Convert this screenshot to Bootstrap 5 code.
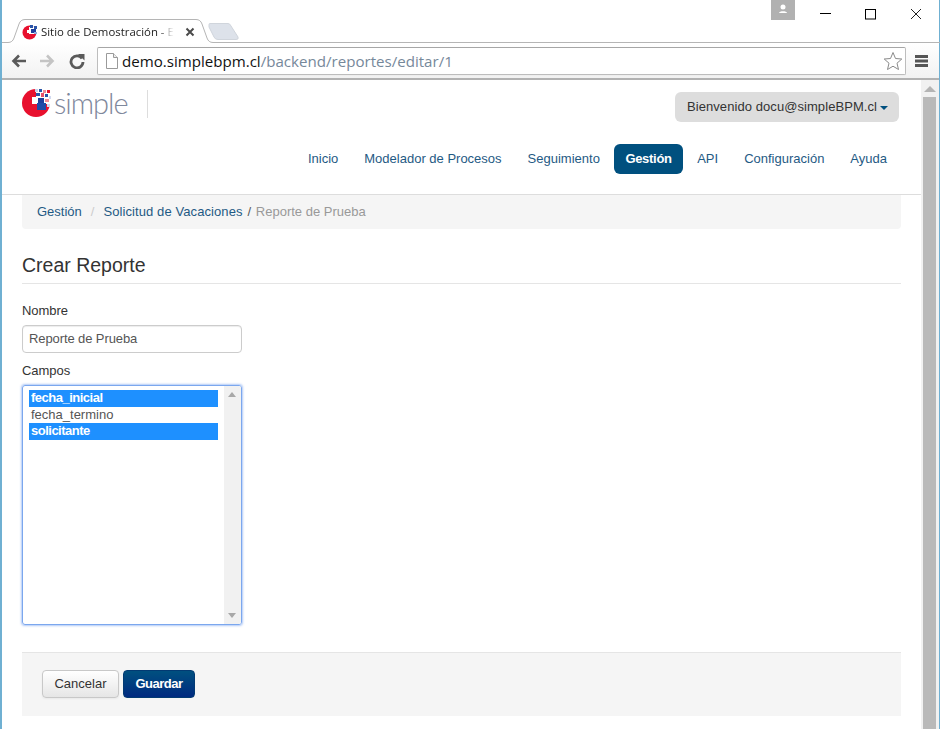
<!DOCTYPE html>
<html lang="es">
<head>
<meta charset="utf-8">
<title>Sitio de Demostración</title>
<link href="https://cdn.jsdelivr.net/npm/bootstrap@5.3.0/dist/css/bootstrap.min.css" rel="stylesheet">
<style>
html,body{margin:0;height:729px;overflow:hidden;background:#fff}
body{font-family:"Liberation Sans",Arial,sans-serif;font-size:13px;color:#333;line-height:18px}
.win{height:729px;width:940px;border-left:2px solid #6fb0d2;border-right:1px solid #6fb0d2;display:flex;flex-direction:column;background:#fff}
.tabbar{height:43px;flex:none;position:relative;background:#fff}
.tabshape{position:absolute;left:0;top:0}
.tabitem{position:absolute;left:20px;top:22px;width:168px;height:20px;display:flex;align-items:center;gap:3px;font-family:"Open Sans","Noto Sans",sans-serif;font-size:11.4px;color:#222}
.tabtext{white-space:nowrap;flex:none;-webkit-mask-image:linear-gradient(90deg,#000 88%,transparent);mask-image:linear-gradient(90deg,#000 88%,transparent)}
.tabx{position:absolute;left:163px;top:5px}
.winctl{position:absolute;left:769px;top:0;width:169px;height:20px}
.avatar{position:absolute;left:0;top:0;width:24px;height:20px;background:#b1b1b1}
.ctl{position:absolute}
.toolbar{height:37px;flex:none;background:linear-gradient(#fff,#f2f2f2);border-bottom:2px solid #b2b2b2;display:flex;align-items:center;position:relative;padding-left:6px}
.tbicon{flex:none;display:block}
.urlbox{position:absolute;left:95px;top:4px;width:809px;height:28px;background:#fff;border:1px solid #bdbdbd;border-top-color:#a6a6a6;border-radius:2px;display:flex;align-items:center;font-family:"Open Sans","Noto Sans",sans-serif;font-size:15.1px;padding-left:24px;white-space:nowrap;box-shadow:0 1px 0 #eee}
.urlhost{color:#111}.urlpath{color:#76889a}
.docicon{position:absolute;left:7px;top:5px}
.staricon{position:absolute;left:785px;top:3px}
.menuicon{position:absolute;left:913px;top:11px}
.viewport{flex:1;display:flex;min-height:0}
.pagearea{flex:1;min-width:0;position:relative}
.vscroll{width:18px;flex:none;background:#f1f1f1;position:relative}
.vthumb{position:absolute;left:2px;top:17px;width:13px;bottom:0;background:#b9b9b9}
.varrow{position:absolute;left:3px;top:6px;width:0;height:0;border-left:6px solid transparent;border-right:6px solid transparent;border-bottom:6px solid #b4b4b4}
.sitehead{height:115px;border-bottom:1px solid #ddd;position:relative}
.logoline{display:flex;align-items:flex-start;position:absolute;left:20px;top:8px;height:30px}
.logosvg{display:block;flex:none}
.logoword{font-family:"Lato",sans-serif;font-weight:300;font-size:29px;line-height:30px;color:#7f889c;margin-left:0;letter-spacing:-1px;width:93px;height:30px}
.logosep{width:1px;height:28px;background:#ddd;flex:none;margin-top:2px}
.welcome{position:absolute;left:673px;top:12px;height:30px;width:224px;background:#ddd;border-radius:6px;border:0;color:#333;font-size:13px;letter-spacing:.07px;padding:0 0 0 12px;display:flex;align-items:center;white-space:nowrap}
.caretdown{display:inline-block;margin-left:3px;margin-top:2px;border-left:4px solid transparent;border-right:4px solid transparent;border-top:4px solid #00507f}
.mainnav{position:absolute;right:22px;top:64px;gap:2px}
.mainnav .nav-link{color:#1f5a84;font-size:13px;line-height:18px;padding:6px 12px;border-radius:6px}
.mainnav .nav-link.active{background:#00507f;color:#fff;font-weight:700;letter-spacing:-.3px;padding:6px 11.500px}
.wrapbody{padding:0 20px}
.crumbs{background:#f5f5f5;height:34px;margin:0;padding:0 15px;border-radius:0 0 4px 4px;align-items:center;font-size:13px;--bs-breadcrumb-margin-bottom:0}
.crumbs a{color:#1f5a84;text-decoration:none}
.crumbs .solink{letter-spacing:.09px}
.crumbs .breadcrumb-item.active{color:#999}
.crumbs .breadcrumb-item+.breadcrumb-item{padding-left:9px}
.crumbs .breadcrumb-item+.breadcrumb-item::before{color:#ccc;padding-right:9px}
.crumbs .breadcrumb-item+.plainsep{padding-left:5px}
.crumbs .breadcrumb-item+.plainsep::before{display:none}
.crumbs .slashmark{color:#555;margin-right:1px}
.pagetitle{font-size:19.500px;font-weight:400;line-height:30px;color:#333;margin:21px 0 0;padding-bottom:2px;border-bottom:1px solid #e5e5e5;height:34px}
.fieldname{display:block;margin:18px 0 5px;font-size:13px;line-height:18px;color:#333;letter-spacing:-.05px}
.textin{width:220px;height:28px;border:1px solid #ccc;border-radius:4px;padding:0 6px;font-size:13px;letter-spacing:-.1px;color:#555;line-height:26px;box-shadow:inset 0 1px 1px rgba(0,0,0,.075)}
.fieldname2{margin-top:9px;margin-bottom:5px}
.multiselect{width:220px;height:240px;border:1px solid #7ba7ee;border-radius:3px;box-shadow:0 0 2px 1px rgba(100,150,240,.5);display:flex;padding:0;overflow:hidden}
.optlist{flex:1;padding:4px 6px;list-style:none;margin:0;font-size:13px;line-height:15.500px;color:#555}
.optlist li{padding-left:2px;height:16.500px}
.optlist li.picked{background:#1e90ff;color:#fff;font-weight:700;letter-spacing:-.5px}
.selscroll{width:17px;flex:none;background:#f1f1f1;position:relative}
.selup,.seldown{position:absolute;left:4px;width:0;height:0;border-left:4px solid transparent;border-right:4px solid transparent}
.selup{top:6px;border-bottom:5px solid #a8a8a8}
.seldown{bottom:6px;border-top:5px solid #a8a8a8}
.actionsbar{margin-top:27px;height:64px;background:#f5f5f5;border-top:1px solid #e5e5e5;padding:17px 20px;display:flex;gap:4px;align-items:flex-start}
.btncancel{width:77px;height:28px;padding:0;font-size:13px;color:#333;background:linear-gradient(#fff,#e6e6e6);border:1px solid #c8c8c8;border-radius:4px;box-shadow:0 1px 2px rgba(0,0,0,.05)}
.btnsave{width:72px;height:28px;padding:0;font-size:13px;letter-spacing:-.5px;font-weight:700;color:#fff;background:linear-gradient(#00507f,#002a80);border:1px solid #023a73;border-radius:4px}
</style>
</head>
<body>
<div class="win">
  <div class="tabbar">
    <svg class="tabshape" width="240" height="43" viewBox="0 0 240 43">
      <path d="M0 42.500H6C9 42.500 11 41 12 38L17 24C18 21 20 19.500 23 19.500H194C197 19.500 199 21 200 24L205 38C206 41 208 42.500 211 42.500H240" fill="#fff" stroke="#b5b5b5" stroke-width="1"/>
      <path d="M207 24.500Q207 23.500 208 23.500H226Q228 23.500 229 26L236 37Q237 39.500 234 39.500H216Q213 39.500 212 37L207 27Z" fill="#dde2ea" stroke="#d0d5dc"/>
    </svg>
    <svg style="position:absolute;left:240px;top:42px" width="698" height="1"><rect width="698" height="1" fill="#b5b5b5"/></svg>
    <div class="tabitem">
      <svg width="16" height="16" viewBox="0 0 16 16" class="flex-none"><circle cx="7.500" cy="8.500" r="7" fill="#e8102e"/><rect x="7" y="3" width="8" height="7" fill="#fff"/><rect x="8" y="1" width="3" height="3" fill="#2a55a8"/><rect x="12" y="2" width="3" height="3" fill="#2a55a8"/><rect x="9" y="5" width="5" height="4" fill="#1f3f9c"/><rect x="5" y="6" width="3" height="3" fill="#fff"/><rect x="12" y="8" width="3" height="2" fill="#8fa8d8"/></svg>
      <span class="tabtext">Sitio de Demostración - E</span>
      <svg class="tabx" width="10" height="10" viewBox="0 0 10 10"><path d="M1.500 1.500L8.500 8.500M8.500 1.500L1.500 8.500" stroke="#4a4a4a" stroke-width="2"/></svg>
    </div>
    <div class="winctl">
      <div class="avatar"><svg width="24" height="20" viewBox="0 0 24 20"><circle cx="12" cy="7" r="2.500" fill="#fff"/><path d="M8 13C8 10.500 16 10.500 16 13Z" fill="#fff"/></svg></div>
      <svg class="ctl" style="left:49px;top:13px" width="11" height="2"><rect width="11" height="1" fill="#000"/></svg>
      <svg class="ctl" style="left:94px;top:9px" width="11" height="11"><rect x=".5" y=".5" width="10" height="9.500" fill="none" stroke="#000"/></svg>
      <svg class="ctl" style="left:139px;top:8px" width="12" height="12" viewBox="0 0 12 12"><path d="M1 1L11 11M11 1L1 11" stroke="#222" stroke-width="1"/></svg>
    </div>
  </div>
  <div class="toolbar">
    <svg class="tbicon" style="margin-left:3px" width="16" height="16" viewBox="0 0 16 16"><path d="M15 8H3M8 2.500L2.500 8L8 13.500" fill="none" stroke="#5a5a5a" stroke-width="2.600"/></svg>
    <svg class="tbicon" style="margin-left:12px" width="16" height="16" viewBox="0 0 16 16"><path d="M1 8H13M8 2.500L13.500 8L8 13.500" fill="none" stroke="#c4c4c4" stroke-width="2.600"/></svg>
    <svg class="tbicon" style="margin-left:14px" width="16" height="16" viewBox="0 0 16 16"><path d="M13 5.500A6 6 0 1 0 14 9" fill="none" stroke="#5a5a5a" stroke-width="2.800"/><path d="M9 1H15.500V7.500Z" fill="#5a5a5a"/></svg>
    <div class="urlbox">
      <svg class="docicon" width="14" height="17" viewBox="0 0 14 17"><path d="M1.500 .5H8.500L12.500 4.500V15.500H1.500Z" fill="#fff" stroke="#9a9a9a"/><path d="M8.500 .5V4.500H12.500" fill="#eee" stroke="#9a9a9a"/></svg>
      <span class="urlhost">demo.simplebpm.cl</span><span class="urlpath">/backend/reportes/editar/1</span>
      <svg class="staricon" width="20" height="20" viewBox="0 0 20 20"><path d="M10 1.500L12.500 7.500L18.800 8L14 12.200L15.500 18.500L10 15.200L4.500 18.500L6 12.200L1.200 8L7.500 7.500Z" fill="#fff" stroke="#8a8a8a" stroke-width="1"/></svg>
    </div>
    <svg class="menuicon" width="14" height="14" viewBox="0 0 14 14"><rect y="1" width="13" height="3" fill="#555"/><rect y="5.500" width="13" height="3" fill="#555"/><rect y="10" width="13" height="3" fill="#555"/></svg>
  </div>
  <div class="viewport">
    <div class="pagearea">
      <header class="sitehead">
        <div class="logoline">
          <svg class="logosvg" width="32" height="30" viewBox="0 0 32 30"><circle cx="14" cy="15" r="14" fill="#e8102e"/>
            <rect x="14" y="1" width="14" height="15" fill="#fff"/><rect x="10" y="9" width="6" height="7" fill="#fff"/>
            <rect x="13" y="1" width="3" height="3" fill="#c9d3ea"/><rect x="17" y="1" width="3" height="3" fill="#2a55a8"/><rect x="21" y="2" width="3" height="3" fill="#f08a98"/><rect x="25" y="2" width="3" height="3" fill="#e8102e"/>
            <rect x="14" y="5" width="4" height="3" fill="#2a55a8"/><rect x="19" y="5" width="3" height="4" fill="#e8506a"/><rect x="23" y="6" width="3" height="3" fill="#2a55a8"/><rect x="27" y="8" width="2" height="3" fill="#d2daf0"/>
            <rect x="16" y="10" width="6" height="5" fill="#1f3f9c"/><rect x="23" y="11" width="4" height="3" fill="#f08a98"/>
            <rect x="15" y="15" width="9" height="7" fill="#1f4aa8"/><rect x="25" y="16" width="3" height="3" fill="#d2daf0"/>
          </svg>
          <span class="logoword">simple</span>
          <span class="logosep"></span>
        </div>
        <button type="button" class="btn welcome">Bienvenido docu@simpleBPM.cl<span class="caretdown"></span></button>
        <ul class="nav nav-pills mainnav">
          <li class="nav-item"><a class="nav-link" href="#">Inicio</a></li>
          <li class="nav-item"><a class="nav-link" href="#">Modelador de Procesos</a></li>
          <li class="nav-item"><a class="nav-link" href="#">Seguimiento</a></li>
          <li class="nav-item"><a class="nav-link active" href="#">Gestión</a></li>
          <li class="nav-item"><a class="nav-link" href="#">API</a></li>
          <li class="nav-item"><a class="nav-link" href="#">Configuración</a></li>
          <li class="nav-item"><a class="nav-link" href="#">Ayuda</a></li>
        </ul>
      </header>
      <main class="wrapbody">
        <ol class="breadcrumb crumbs">
          <li class="breadcrumb-item"><a href="#">Gestión</a></li>
          <li class="breadcrumb-item"><a class="solink" href="#">Solicitud de Vacaciones</a></li>
          <li class="breadcrumb-item plainsep active"><span class="slashmark">/</span> Reporte de Prueba</li>
        </ol>
        <h1 class="pagetitle">Crear Reporte</h1>
        <form>
          <label class="fieldname">Nombre</label>
          <div class="textin">Reporte de Prueba</div>
          <label class="fieldname fieldname2">Campos</label>
          <div class="multiselect">
            <ul class="optlist">
              <li class="picked">fecha_inicial</li>
              <li>fecha_termino</li>
              <li class="picked">solicitante</li>
            </ul>
            <div class="selscroll"><span class="selup"></span><span class="seldown"></span></div>
          </div>
          <div class="actionsbar">
            <button type="button" class="btn btncancel">Cancelar</button>
            <button type="button" class="btn btnsave">Guardar</button>
          </div>
        </form>
      </main>
    </div>
    <div class="vscroll"><span class="varrow"></span><span class="vthumb"></span></div>
  </div>
</div>
</body>
</html>
